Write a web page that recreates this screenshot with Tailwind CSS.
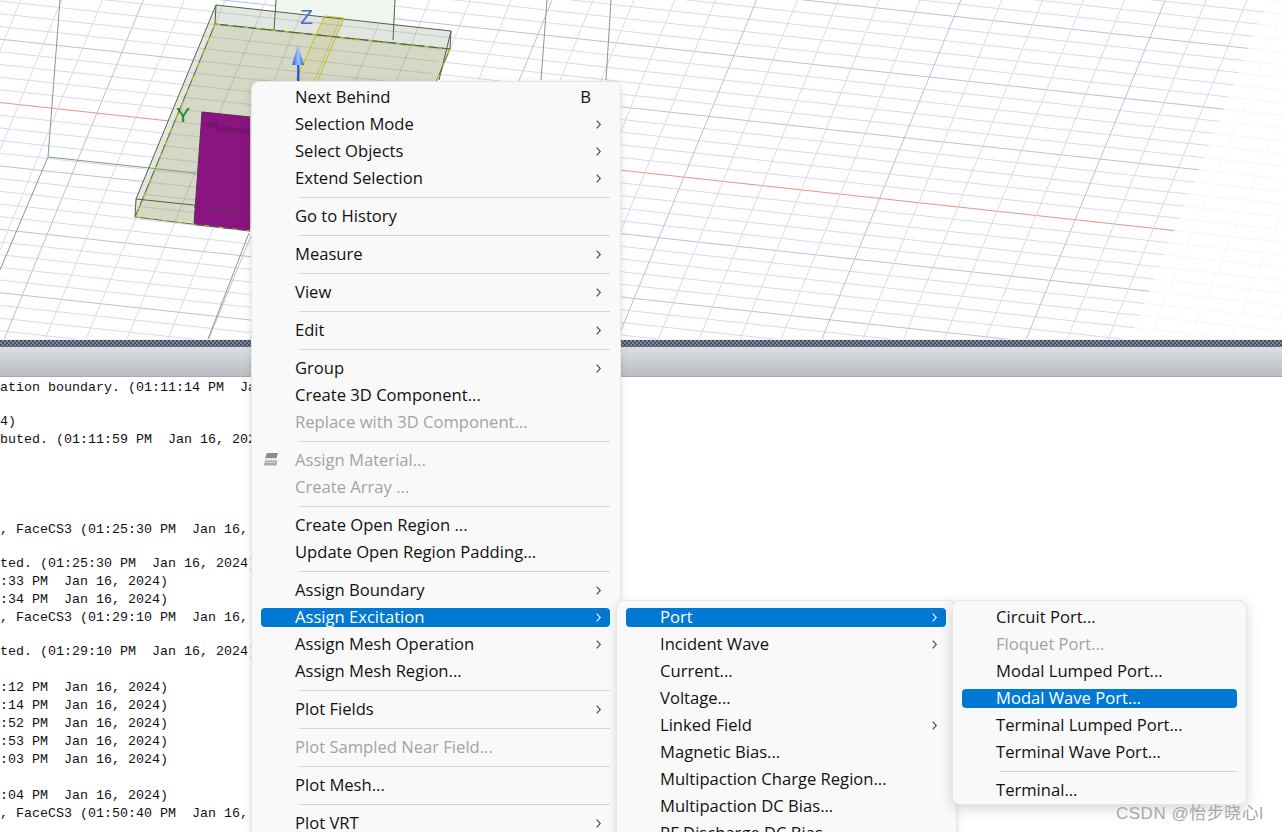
<!DOCTYPE html>
<html lang="en">
<head>
  <meta charset="UTF-8" />
  <title>Assign Excitation menu</title>
  <script src="https://cdn.jsdelivr.net/npm/@tailwindcss/browser@4"></script>
</head>
<body class="bg-white">
  <div class="relative w-[1282px] h-[832px] overflow-hidden bg-white">
    <!-- 3D view -->
    <svg id="view" class="block" width="1282" height="339" viewBox="0 0 1282 339">
      <defs>
        <linearGradient id="arrowFill" x1="0" x2="1" y1="0" y2="0">
          <stop offset="0" stop-color="#2a5de8" />
          <stop offset="0.55" stop-color="#9cc4ff" />
          <stop offset="1" stop-color="#2a5de8" />
        </linearGradient>
      </defs>
      <g id="grid"></g>
      <g id="model">
        <polygon points="276,0 395,0 393,40 274,30" fill="#f0f5f0" />
        <polygon points="216,5 451,31 450,49 215,24" fill="#e1e6e0" />
        <polygon points="216,5 215,24 135,217 136,199" fill="#e3e7df" />
        <polygon points="215,24 450,49 360,240 135,217" fill="#d5d8c5" />
        <polygon points="324.5,16 344,18 318,80 296,80" fill="#d3d5b4" />
      </g>
      <g id="gridOver"></g>
      <g fill="none" stroke="#7f9f7f" stroke-width="1">
        <path d="M60 0L48 157L196 173M48 157L0 270M547 0L541 80M611 0L606 80M249 233L208 339" />
      </g>
      <g fill="none" stroke="#4c6448" stroke-width="1">
        <path d="M276 0L274 30M395 0L393 40" />
        <path d="M216 5L451 31L450 49L215 24L216 5M216 5L136 199L135 217M451 31L439 80M136 199L250 211" />
      </g>
      <polygon points="202,112 250,117 250,231 194,225" fill="#8b1580" />
      <polygon points="202,124 218,120 218,126 250,129 250,134 218,131" fill="#771670" />
      <path d="M202 112L250 117M202 112L194 224M194 207L250 212" fill="none" stroke="#5e2a5a" stroke-width="1" />
      <path d="M324.500 16L344 18M324.500 16L296 80M344 18L318 80" fill="none" stroke="#c9c400" stroke-width="1" />
      <path d="M215 24L450 49M215 24L135 217M135 217L250 231M450 49L428 100" fill="none" stroke="#4c6448" stroke-width="1" />
      <path d="M215 24L450 49M215 24L135 217M135 217L250 231M450 49L428 100" fill="none" stroke="#c9c400" stroke-width="1" stroke-dasharray="5 9" />
      <rect x="297" y="64" width="2.5" height="18" fill="#2a5de8" />
      <polygon points="298,45 292,65 304,65" fill="url(#arrowFill)" />
      <text x="300" y="24" fill="#4a6bd0" font-family="Liberation Sans, sans-serif" font-size="21">Z</text>
      <text x="176" y="122" fill="#0d8c25" font-family="Liberation Sans, sans-serif" font-size="21">Y</text>
    </svg>

    <!-- splitter -->
    <div class="h-px bg-[#f2f2f2]"></div>
    <div class="h-[7px] bg-[repeating-conic-gradient(#84878b_0_25%,#3f5074_0_50%)] bg-[length:4px_4px]"></div>
    <div class="h-[30px] bg-gradient-to-b from-[#dcdfe3] to-[#b9bcc0] border-b border-[#a9a9a9]"></div>

    <!-- message log -->
    <div class="font-['Liberation_Mono',monospace] text-[13.33px] leading-[18px] text-[#111] *:whitespace-pre">
      <div class="mt-[2px]">ation boundary. (01:11:14 PM  Jan 16, 2024)</div>
      <div class="mt-[16px]">4)</div>
      <div>buted. (01:11:59 PM  Jan 16, 2024)</div>
      <div class="mt-[72px]">, FaceCS3 (01:25:30 PM  Jan 16, 2024)</div>
      <div class="mt-[16px]">ted. (01:25:30 PM  Jan 16, 2024)</div>
      <div>:33 PM  Jan 16, 2024)</div>
      <div>:34 PM  Jan 16, 2024)</div>
      <div>, FaceCS3 (01:29:10 PM  Jan 16, 2024)</div>
      <div class="mt-[16px]">ted. (01:29:10 PM  Jan 16, 2024)</div>
      <div class="mt-[18px]">:12 PM  Jan 16, 2024)</div>
      <div>:14 PM  Jan 16, 2024)</div>
      <div>:52 PM  Jan 16, 2024)</div>
      <div>:53 PM  Jan 16, 2024)</div>
      <div>:03 PM  Jan 16, 2024)</div>
      <div class="mt-[18px]">:04 PM  Jan 16, 2024)</div>
      <div>, FaceCS3 (01:50:40 PM  Jan 16, 2024)</div>
    </div>

    <!-- main context menu -->
    <div class="absolute left-[251px] top-[81px] w-[370px] h-[790px] pt-[2px] bg-[#f9f9f9] border border-[#e6e6e6] rounded-lg shadow-[0_2px_8px_rgba(0,0,0,0.12)] font-['Open_Sans',sans-serif] text-[16.6px] text-[#111]">
      <div class="h-[27px] py-1 ml-[9px] mr-[10px]"><div class="h-[19px] pl-[34px] pr-[19px] rounded flex items-center justify-between"><span>Next Behind</span><span>B</span></div></div>
      <div class="h-[27px] py-1 ml-[9px] mr-[10px]"><div class="h-[19px] pl-[34px] pr-[9px] rounded flex items-center justify-between"><span>Selection Mode</span><svg width="5" height="9" viewBox="0 0 5 9" fill="none" stroke="#444" stroke-width="1.1"><path d="M.7.7l3.6 3.8L.7 8.3" /></svg></div></div>
      <div class="h-[27px] py-1 ml-[9px] mr-[10px]"><div class="h-[19px] pl-[34px] pr-[9px] rounded flex items-center justify-between"><span>Select Objects</span><svg width="5" height="9" viewBox="0 0 5 9" fill="none" stroke="#444" stroke-width="1.1"><path d="M.7.7l3.6 3.8L.7 8.3" /></svg></div></div>
      <div class="h-[27px] py-1 ml-[9px] mr-[10px]"><div class="h-[19px] pl-[34px] pr-[9px] rounded flex items-center justify-between"><span>Extend Selection</span><svg width="5" height="9" viewBox="0 0 5 9" fill="none" stroke="#444" stroke-width="1.1"><path d="M.7.7l3.6 3.8L.7 8.3" /></svg></div></div>
      <div class="h-px my-[5px] ml-[47px] mr-[10px] bg-[#d6d6d6]"></div>
      <div class="h-[27px] py-1 ml-[9px] mr-[10px]"><div class="h-[19px] pl-[34px] rounded flex items-center"><span>Go to History</span></div></div>
      <div class="h-px my-[5px] ml-[47px] mr-[10px] bg-[#d6d6d6]"></div>
      <div class="h-[27px] py-1 ml-[9px] mr-[10px]"><div class="h-[19px] pl-[34px] pr-[9px] rounded flex items-center justify-between"><span>Measure</span><svg width="5" height="9" viewBox="0 0 5 9" fill="none" stroke="#444" stroke-width="1.1"><path d="M.7.7l3.6 3.8L.7 8.3" /></svg></div></div>
      <div class="h-px my-[5px] ml-[47px] mr-[10px] bg-[#d6d6d6]"></div>
      <div class="h-[27px] py-1 ml-[9px] mr-[10px]"><div class="h-[19px] pl-[34px] pr-[9px] rounded flex items-center justify-between"><span>View</span><svg width="5" height="9" viewBox="0 0 5 9" fill="none" stroke="#444" stroke-width="1.1"><path d="M.7.7l3.6 3.8L.7 8.3" /></svg></div></div>
      <div class="h-px my-[5px] ml-[47px] mr-[10px] bg-[#d6d6d6]"></div>
      <div class="h-[27px] py-1 ml-[9px] mr-[10px]"><div class="h-[19px] pl-[34px] pr-[9px] rounded flex items-center justify-between"><span>Edit</span><svg width="5" height="9" viewBox="0 0 5 9" fill="none" stroke="#444" stroke-width="1.1"><path d="M.7.7l3.6 3.8L.7 8.3" /></svg></div></div>
      <div class="h-px my-[5px] ml-[47px] mr-[10px] bg-[#d6d6d6]"></div>
      <div class="h-[27px] py-1 ml-[9px] mr-[10px]"><div class="h-[19px] pl-[34px] pr-[9px] rounded flex items-center justify-between"><span>Group</span><svg width="5" height="9" viewBox="0 0 5 9" fill="none" stroke="#444" stroke-width="1.1"><path d="M.7.7l3.6 3.8L.7 8.3" /></svg></div></div>
      <div class="h-[27px] py-1 ml-[9px] mr-[10px]"><div class="h-[19px] pl-[34px] rounded flex items-center"><span>Create 3D Component...</span></div></div>
      <div class="h-[27px] py-1 ml-[9px] mr-[10px]"><div class="h-[19px] pl-[34px] rounded flex items-center text-[#a3a3a3]"><span>Replace with 3D Component...</span></div></div>
      <div class="h-px my-[5px] ml-[47px] mr-[10px] bg-[#d6d6d6]"></div>
      <div class="h-[27px] py-1 ml-[9px] mr-[10px]"><div class="relative h-[19px] pl-[34px] rounded flex items-center text-[#a3a3a3]">
        <svg class="absolute left-[2px] top-[1px]" width="16" height="15" viewBox="0 0 16 15"><path d="M4 1h11l-1.500 5H2z" fill="#8c8c8c" /><path d="M2 7h12" stroke="#b5b5b5" stroke-dasharray="1 1" /><path d="M2 8.500h12.500l-1.200 5H1z" fill="#a8a8a8" /><path d="M2.500 10.500h10" stroke="#d8d8d8" /></svg>
        <span>Assign Material...</span></div></div>
      <div class="h-[27px] py-1 ml-[9px] mr-[10px]"><div class="h-[19px] pl-[34px] rounded flex items-center text-[#a3a3a3]"><span>Create Array ...</span></div></div>
      <div class="h-px my-[5px] ml-[47px] mr-[10px] bg-[#d6d6d6]"></div>
      <div class="h-[27px] py-1 ml-[9px] mr-[10px]"><div class="h-[19px] pl-[34px] rounded flex items-center"><span>Create Open Region ...</span></div></div>
      <div class="h-[27px] py-1 ml-[9px] mr-[10px]"><div class="h-[19px] pl-[34px] rounded flex items-center"><span>Update Open Region Padding...</span></div></div>
      <div class="h-px my-[5px] ml-[47px] mr-[10px] bg-[#d6d6d6]"></div>
      <div class="h-[27px] py-1 ml-[9px] mr-[10px]"><div class="h-[19px] pl-[34px] pr-[9px] rounded flex items-center justify-between"><span>Assign Boundary</span><svg width="5" height="9" viewBox="0 0 5 9" fill="none" stroke="#444" stroke-width="1.1"><path d="M.7.7l3.6 3.8L.7 8.3" /></svg></div></div>
      <div class="h-[27px] py-1 ml-[9px] mr-[10px]"><div class="h-[19px] pl-[34px] pr-[9px] rounded flex items-center justify-between bg-[#0078d4] text-white"><span>Assign Excitation</span><svg width="5" height="9" viewBox="0 0 5 9" fill="none" stroke="#fff" stroke-width="1.1"><path d="M.7.7l3.6 3.8L.7 8.3" /></svg></div></div>
      <div class="h-[27px] py-1 ml-[9px] mr-[10px]"><div class="h-[19px] pl-[34px] pr-[9px] rounded flex items-center justify-between"><span>Assign Mesh Operation</span><svg width="5" height="9" viewBox="0 0 5 9" fill="none" stroke="#444" stroke-width="1.1"><path d="M.7.7l3.6 3.8L.7 8.3" /></svg></div></div>
      <div class="h-[27px] py-1 ml-[9px] mr-[10px]"><div class="h-[19px] pl-[34px] rounded flex items-center"><span>Assign Mesh Region...</span></div></div>
      <div class="h-px my-[5px] ml-[47px] mr-[10px] bg-[#d6d6d6]"></div>
      <div class="h-[27px] py-1 ml-[9px] mr-[10px]"><div class="h-[19px] pl-[34px] pr-[9px] rounded flex items-center justify-between"><span>Plot Fields</span><svg width="5" height="9" viewBox="0 0 5 9" fill="none" stroke="#444" stroke-width="1.1"><path d="M.7.7l3.6 3.8L.7 8.3" /></svg></div></div>
      <div class="h-px my-[5px] ml-[47px] mr-[10px] bg-[#d6d6d6]"></div>
      <div class="h-[27px] py-1 ml-[9px] mr-[10px]"><div class="h-[19px] pl-[34px] rounded flex items-center text-[#a3a3a3]"><span>Plot Sampled Near Field...</span></div></div>
      <div class="h-px my-[5px] ml-[47px] mr-[10px] bg-[#d6d6d6]"></div>
      <div class="h-[27px] py-1 ml-[9px] mr-[10px]"><div class="h-[19px] pl-[34px] rounded flex items-center"><span>Plot Mesh...</span></div></div>
      <div class="h-px my-[5px] ml-[47px] mr-[10px] bg-[#d6d6d6]"></div>
      <div class="h-[27px] py-1 ml-[9px] mr-[10px]"><div class="h-[19px] pl-[34px] pr-[9px] rounded flex items-center justify-between"><span>Plot VRT</span><svg width="5" height="9" viewBox="0 0 5 9" fill="none" stroke="#444" stroke-width="1.1"><path d="M.7.7l3.6 3.8L.7 8.3" /></svg></div></div>
    </div>

    <!-- Assign Excitation submenu -->
    <div class="absolute left-[616px] top-[600px] w-[341px] h-[300px] pt-[3px] bg-[#f9f9f9] border border-[#e6e6e6] rounded-lg shadow-[0_2px_8px_rgba(0,0,0,0.12)] font-['Open_Sans',sans-serif] text-[16.6px] text-[#111]">
      <div class="h-[27px] py-1 ml-[9px] mr-[10px]"><div class="h-[19px] pl-[34px] pr-[9px] rounded flex items-center justify-between bg-[#0078d4] text-white"><span>Port</span><svg width="5" height="9" viewBox="0 0 5 9" fill="none" stroke="#fff" stroke-width="1.1"><path d="M.7.7l3.6 3.8L.7 8.3" /></svg></div></div>
      <div class="h-[27px] py-1 ml-[9px] mr-[10px]"><div class="h-[19px] pl-[34px] pr-[9px] rounded flex items-center justify-between"><span>Incident Wave</span><svg width="5" height="9" viewBox="0 0 5 9" fill="none" stroke="#444" stroke-width="1.1"><path d="M.7.7l3.6 3.8L.7 8.3" /></svg></div></div>
      <div class="h-[27px] py-1 ml-[9px] mr-[10px]"><div class="h-[19px] pl-[34px] rounded flex items-center"><span>Current...</span></div></div>
      <div class="h-[27px] py-1 ml-[9px] mr-[10px]"><div class="h-[19px] pl-[34px] rounded flex items-center"><span>Voltage...</span></div></div>
      <div class="h-[27px] py-1 ml-[9px] mr-[10px]"><div class="h-[19px] pl-[34px] pr-[9px] rounded flex items-center justify-between"><span>Linked Field</span><svg width="5" height="9" viewBox="0 0 5 9" fill="none" stroke="#444" stroke-width="1.1"><path d="M.7.7l3.6 3.8L.7 8.3" /></svg></div></div>
      <div class="h-[27px] py-1 ml-[9px] mr-[10px]"><div class="h-[19px] pl-[34px] rounded flex items-center"><span>Magnetic Bias...</span></div></div>
      <div class="h-[27px] py-1 ml-[9px] mr-[10px]"><div class="h-[19px] pl-[34px] rounded flex items-center"><span>Multipaction Charge Region...</span></div></div>
      <div class="h-[27px] py-1 ml-[9px] mr-[10px]"><div class="h-[19px] pl-[34px] rounded flex items-center"><span>Multipaction DC Bias...</span></div></div>
      <div class="h-[27px] py-1 ml-[9px] mr-[10px]"><div class="h-[19px] pl-[34px] rounded flex items-center"><span>RF Discharge DC Bias...</span></div></div>
    </div>

    <!-- Port submenu -->
    <div class="absolute left-[952px] top-[600px] w-[295px] h-[205px] pt-[3px] bg-[#f9f9f9] border border-[#e6e6e6] rounded-lg shadow-[0_4px_14px_rgba(0,0,0,0.16)] font-['Open_Sans',sans-serif] text-[16.6px] text-[#111]">
      <div class="h-[27px] py-1 ml-[9px] mr-[9px]"><div class="h-[19px] pl-[34px] rounded flex items-center"><span>Circuit Port...</span></div></div>
      <div class="h-[27px] py-1 ml-[9px] mr-[9px]"><div class="h-[19px] pl-[34px] rounded flex items-center text-[#a3a3a3]"><span>Floquet Port...</span></div></div>
      <div class="h-[27px] py-1 ml-[9px] mr-[9px]"><div class="h-[19px] pl-[34px] rounded flex items-center"><span>Modal Lumped Port...</span></div></div>
      <div class="h-[27px] py-1 ml-[9px] mr-[9px]"><div class="h-[19px] pl-[34px] rounded flex items-center bg-[#0078d4] text-white"><span>Modal Wave Port...</span></div></div>
      <div class="h-[27px] py-1 ml-[9px] mr-[9px]"><div class="h-[19px] pl-[34px] rounded flex items-center"><span>Terminal Lumped Port...</span></div></div>
      <div class="h-[27px] py-1 ml-[9px] mr-[9px]"><div class="h-[19px] pl-[34px] rounded flex items-center"><span>Terminal Wave Port...</span></div></div>
      <div class="h-px my-[5px] ml-[47px] mr-[9px] bg-[#d6d6d6]"></div>
      <div class="h-[27px] py-1 ml-[9px] mr-[9px]"><div class="h-[19px] pl-[34px] rounded flex items-center"><span>Terminal...</span></div></div>
    </div>

    <!-- watermark -->
    <div class="absolute left-[1116px] top-[803px] font-['Liberation_Sans','Noto_Sans_CJK_SC',sans-serif] text-[17px] tracking-[0.5px] leading-[22px] text-[#a8a8a8] whitespace-nowrap">CSDN @怡步晓心l</div>
  </div>

  <script>
    // grid lines: same slopes as the view, anchored on the red axis
    const NS = 'http://www.w3.org/2000/svg';
    const grid = document.getElementById('grid');
    const gridOver = document.getElementById('gridOver');

    function line(parent, x1, y1, x2, y2, color) {
      const l = document.createElementNS(NS, 'line');
      l.setAttribute('x1', x1);
      l.setAttribute('y1', y1);
      l.setAttribute('x2', x2);
      l.setAttribute('y2', y2);
      l.setAttribute('stroke', color);
      parent.appendChild(l);
    }

    const SLOPE = 0.109, LEAN = 0.41, ROW = 63.4 / 5, COL = 204.4 / 5;

    for (let n = -30; n <= 45; n++) {
      const y0 = 172.3 - 640 * SLOPE + n * ROW;   // y at x = 0
      const major = n % 5 === 0;
      const endX = (1268.5 - LEAN * y0) / (1 + LEAN * SLOPE);
      const endY = y0 + SLOPE * endX;
      let color = major ? '#c3bcdc' : '#dcd8ec';
      if (n === 0) color = '#e29393';
      line(grid, endX, endY, 1282, y0 + SLOPE * 1282, n === 0 ? '#fdf1f1' : '#f8f6f9');
      line(grid, 0, y0, endX, endY, color);
      if (endY > 0) line(gridOver, 130, y0 + SLOPE * 130, 450, y0 + SLOPE * 450, 'rgba(120,120,120,0.25)');
    }

    for (let k = -30; k <= 20; k++) {
      const x0 = 756.5 + k * COL;
      const major = k % 5 === 0;
      const color = x0 > 1250 ? '#f8f6f9' : (major ? '#c3bcdc' : '#dcd8ec');
      line(grid, x0, 0, x0 - LEAN * 339, 339, color);
      if (x0 > 200 && x0 < 480) line(gridOver, x0, 0, x0 - LEAN * 339, 339, 'rgba(120,120,120,0.25)');
    }

    // overlay lines only belong on the substrate
    const clip = document.createElementNS(NS, 'clipPath');
    clip.id = 'onModel';
    const poly = document.createElementNS(NS, 'polygon');
    poly.setAttribute('points', '216,5 451,31 360,240 135,217');
    clip.appendChild(poly);
    document.querySelector('#view defs').appendChild(clip);
    gridOver.setAttribute('clip-path', 'url(#onModel)');
  </script>
</body>
</html>
